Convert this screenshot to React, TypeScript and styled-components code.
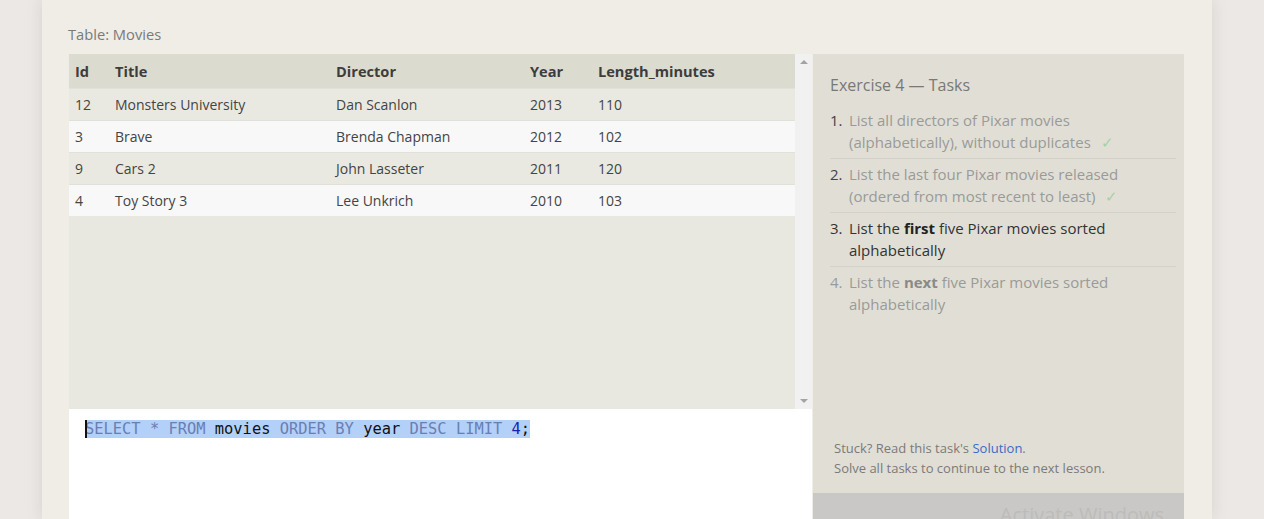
import React from "react";
import styled, { createGlobalStyle } from "styled-components";

const GlobalStyle = createGlobalStyle`
  html, body {
    margin: 0;
    padding: 0;
    background: #ebe8e5;
    overflow: hidden;
    font-family: "Open Sans", "Noto Sans", sans-serif;
  }
`;

const movies = [
  { id: 12, title: "Monsters University", director: "Dan Scanlon", year: 2013, length: 110 },
  { id: 3, title: "Brave", director: "Brenda Chapman", year: 2012, length: 102 },
  { id: 9, title: "Cars 2", director: "John Lasseter", year: 2011, length: 120 },
  { id: 4, title: "Toy Story 3", director: "Lee Unkrich", year: 2010, length: 103 },
];

const tasks = [
  { state: "done", text: <>List all directors of Pixar movies (alphabetically), without duplicates</> },
  { state: "done", text: <>List the last four Pixar movies released (ordered from most recent to least)</> },
  { state: "active", text: <>List the <b>first</b> five Pixar movies sorted alphabetically</> },
  { state: "todo", text: <>List the <b>next</b> five Pixar movies sorted alphabetically</> },
];

const App = () => {
  return (
    <Page>
      <GlobalStyle />
      <Card>
        <TableLabel>Table: Movies</TableLabel>
        <Workspace>
          <LeftColumn>
            <Results>
              <TableScroll>
                <Table>
                  <colgroup>
                    <col style={{ width: 40 }} />
                    <col style={{ width: 221 }} />
                    <col style={{ width: 194 }} />
                    <col style={{ width: 68 }} />
                    <col />
                  </colgroup>
                  <thead>
                    <tr>
                      <Th>Id</Th>
                      <Th>Title</Th>
                      <Th>Director</Th>
                      <Th>Year</Th>
                      <Th>Length_minutes</Th>
                    </tr>
                  </thead>
                  <tbody>
                    {movies.map((m, i) => (
                      <Row key={m.id} $odd={i % 2 === 1}>
                        <Td>{m.id}</Td>
                        <Td>{m.title}</Td>
                        <Td>{m.director}</Td>
                        <Td>{m.year}</Td>
                        <Td>{m.length}</Td>
                      </Row>
                    ))}
                  </tbody>
                </Table>
              </TableScroll>
              <Scrollbar>
                <Arrow $up />
                <Arrow />
              </Scrollbar>
            </Results>
            <Editor>
              <CodeLine>
                <Caret />
                <Selection>
                  <Kw>SELECT</Kw> <Kw>*</Kw> <Kw>FROM</Kw> <Ident>movies</Ident> <Kw>ORDER</Kw>{" "}
                  <Kw>BY</Kw> <Ident>year</Ident> <Kw>DESC</Kw> <Kw>LIMIT</Kw> <Num>4</Num>
                  <Ident>;</Ident>
                </Selection>
              </CodeLine>
            </Editor>
          </LeftColumn>
          <RightColumn>
            <TasksPanel>
              <TasksTitle>Exercise 4 — Tasks</TasksTitle>
              <TaskList>
                {tasks.map((t, i) => (
                  <Task key={i} $state={t.state}>
                    <TaskNum $state={t.state}>{i + 1}.</TaskNum>
                    <TaskText>
                      {t.text}
                      {t.state === "done" && <Check>✓</Check>}
                    </TaskText>
                  </Task>
                ))}
              </TaskList>
              <Footer>
                <FootLine>
                  Stuck? Read this task's <SolutionLink href="#">Solution</SolutionLink>.
                </FootLine>
                <FootLine>Solve all tasks to continue to the next lesson.</FootLine>
              </Footer>
            </TasksPanel>
            <ContinueBar>
              <Watermark>Activate Windows</Watermark>
            </ContinueBar>
          </RightColumn>
        </Workspace>
      </Card>
    </Page>
  );
};

const Page = styled.div`
  height: 519px;
  padding-left: 42px;
`;

const Card = styled.div`
  width: 1170px;
  height: 519px;
  box-sizing: border-box;
  padding: 24px 28px 0 27px;
  background: #efede6;
  box-shadow: 0 0 14px rgba(120, 110, 110, 0.18);
  overflow: hidden;
`;

const TableLabel = styled.div`
  font-size: 14.7px;
  line-height: 20px;
  color: #7a7a7a;
  margin: 0 0 10px -1px;
`;

const Workspace = styled.div`
  display: grid;
  grid-template-columns: 743px 371px;
  column-gap: 1px;
  align-items: start;
`;

const LeftColumn = styled.div`
  display: flex;
  flex-direction: column;
`;

const Results = styled.div`
  display: flex;
  height: 355px;
  background: #e9e8e0;
`;

const TableScroll = styled.div`
  flex: 1;
`;

const Table = styled.table`
  width: 100%;
  border-collapse: collapse;
  table-layout: fixed;
  font-size: 14px;
  color: #444;
`;

const Th = styled.th`
  text-align: left;
  font-weight: 700;
  height: 34px;
  padding: 0 6px;
  background: #dcdbcf;
  color: #3d3d3d;
  font-size: 14.6px;
`;

const Row = styled.tr<{ $odd: boolean }>`
  background: ${(p) => (p.$odd ? "#f8f8f8" : "#eae9e1")};
  border-top: 1px solid #e2e1d8;
`;

const Td = styled.td`
  height: 31px;
  padding: 0 6px;
  white-space: nowrap;
`;

const Scrollbar = styled.div`
  width: 17px;
  background: #f1f1f1;
  display: flex;
  flex-direction: column;
  justify-content: space-between;
  align-items: center;
  padding: 6px 0;
  box-sizing: border-box;
`;

const Arrow = styled.div<{ $up?: boolean }>`
  width: 0;
  height: 0;
  border-left: 4px solid transparent;
  border-right: 4px solid transparent;
  ${(p) => (p.$up ? "border-bottom: 4px solid #a3a3a3;" : "border-top: 4px solid #a3a3a3;")}
`;

const Editor = styled.div`
  background: #ffffff;
  height: 140px;
  padding: 11px 0 0 16px;
  box-sizing: border-box;
`;

const CodeLine = styled.div`
  display: flex;
  align-items: center;
  font-family: "DejaVu Sans Mono", "Liberation Mono", monospace;
  font-size: 15.4px;
  line-height: 18px;
  white-space: pre;
`;

const Caret = styled.span`
  width: 2px;
  height: 18px;
  background: #111;
  margin-right: -2px;
  position: relative;
  z-index: 1;
`;

const Selection = styled.span`
  background: #b3d0f8;
`;

const Kw = styled.span`
  color: #6a7eb3;
`;

const Ident = styled.span`
  color: #111;
`;

const Num = styled.span`
  color: #1d1db0;
`;

const RightColumn = styled.div`
  display: flex;
  flex-direction: column;
`;

const TasksPanel = styled.div`
  height: 439px;
  background: #e1dfd5;
  padding: 19px 8px 0 17px;
  box-sizing: border-box;
  display: flex;
  flex-direction: column;
`;

const TasksTitle = styled.div`
  font-size: 16px;
  line-height: 24px;
  color: #787878;
  margin-bottom: 12px;
`;

const TaskList = styled.ol`
  list-style: none;
  margin: 0;
  padding: 0;
`;

const Task = styled.li<{ $state: string }>`
  display: flex;
  font-size: 15px;
  line-height: 22px;
  padding: 0 0 5px;
  margin-bottom: 4px;
  border-bottom: 1px solid #d4d2c8;
  color: ${(p) => (p.$state === "active" ? "#333" : "#9a9a98")};
  &:last-child {
    border-bottom: none;
  }
  b {
    color: ${(p) => (p.$state === "active" ? "#222" : "#8a8a88")};
  }
`;

const TaskNum = styled.span<{ $state: string }>`
  width: 19px;
  flex: none;
  padding-left: 2px;
  margin-left: -2px;
  color: ${(p) => (p.$state === "done" ? "#444" : p.$state === "active" ? "#333" : "#9a9a98")};
`;

const TaskText = styled.span`
  flex: 1;
`;

const Check = styled.span`
  color: #a9cfa6;
  margin-left: 10px;
`;

const Footer = styled.div`
  margin-top: auto;
  padding: 0 0 15px 4px;
`;

const FootLine = styled.div`
  font-size: 13px;
  line-height: 20px;
  color: #7a7a7a;
`;

const SolutionLink = styled.a`
  color: #3b6ac4;
  text-decoration: none;
`;

const ContinueBar = styled.div`
  height: 60px;
  background: #c9c8c6;
  display: flex;
  justify-content: flex-end;
  padding: 8px 20px 0 0;
  box-sizing: border-box;
  overflow: hidden;
`;

const Watermark = styled.span`
  font-family: "Open Sans", sans-serif;
  font-size: 20px;
  line-height: 28px;
  color: #bdbcba;
`;

export default App;
